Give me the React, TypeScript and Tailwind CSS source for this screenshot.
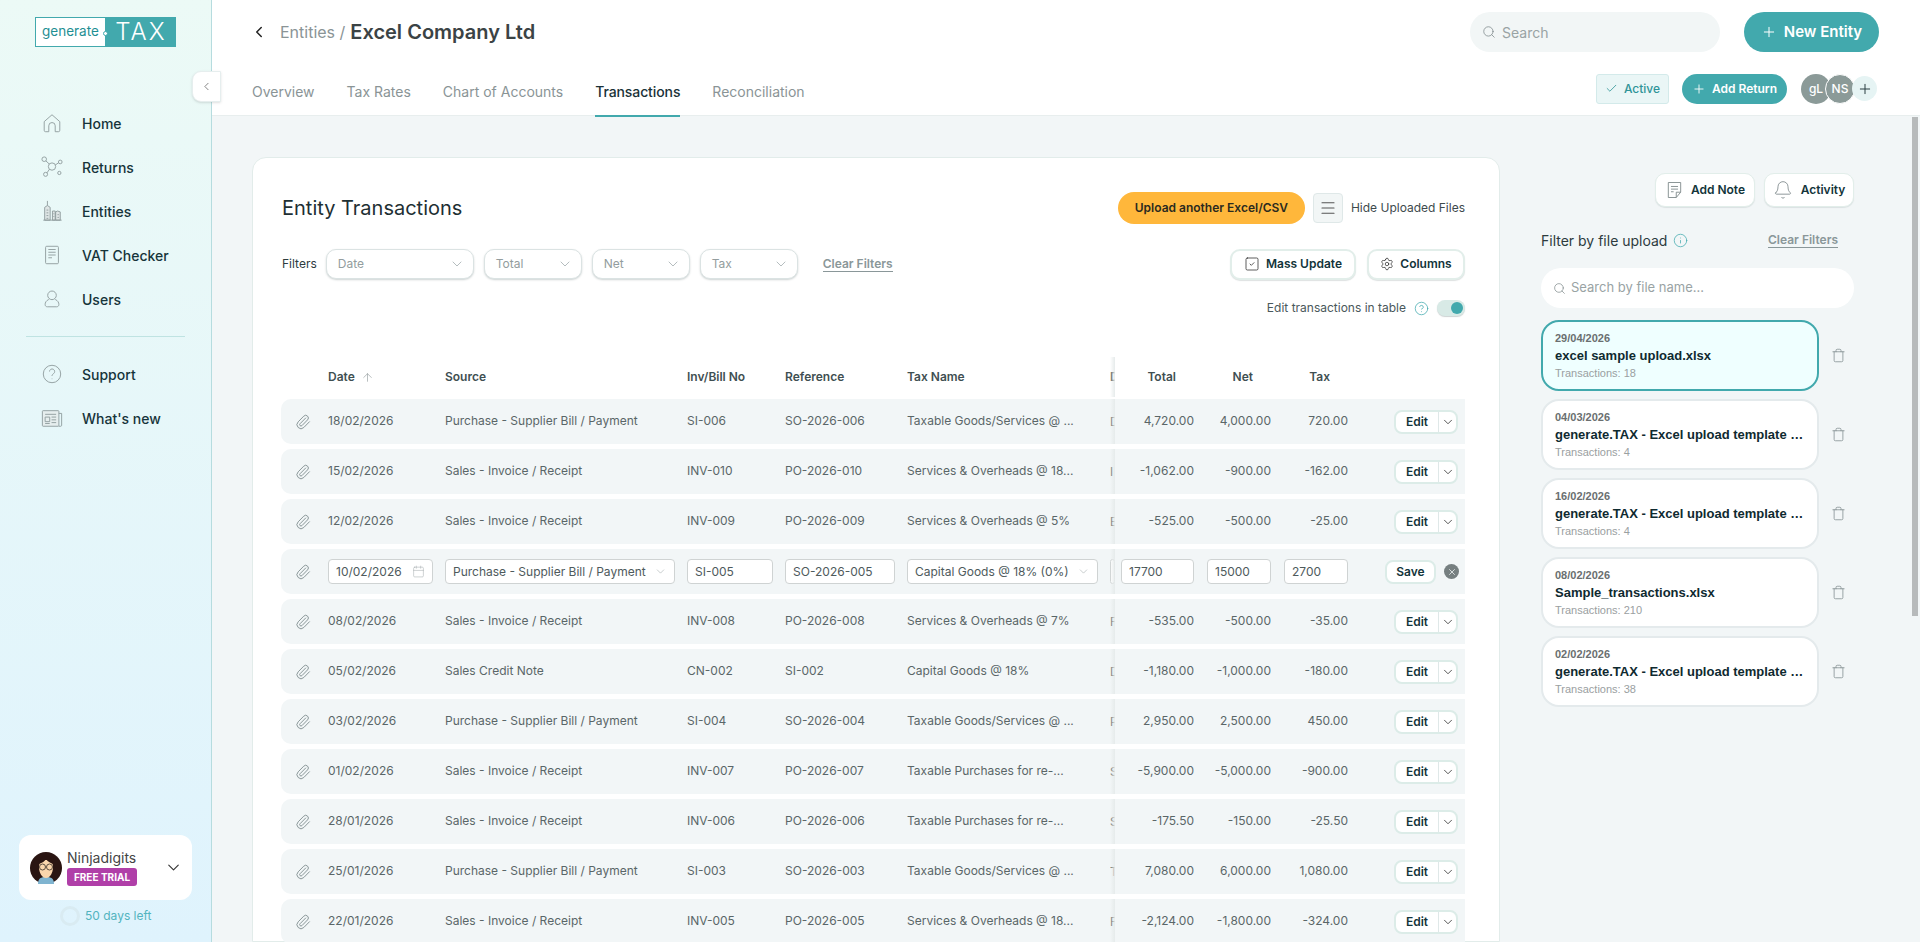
import {
  Bell,
  Calendar,
  Check,
  ChevronDown,
  ChevronLeft,
  CircleHelp,
  Info,
  Menu,
  Paperclip,
  Plus,
  Search,
  Settings,
  SquareCheck,
  Trash,
  ArrowUp,
  X,
} from "lucide-react";

const gridCols =
  "grid w-[1184px] grid-cols-[47px_117px_242px_98px_122px_203px_5px_79px_77px_77px_1fr] items-center";

type Txn = {
  date: string;
  source: string;
  inv: string;
  ref: string;
  taxName: string;
  d: string;
  total: string;
  net: string;
  tax: string;
};

const PURCHASE = "Purchase - Supplier Bill / Payment";
const SALES = "Sales - Invoice / Receipt";

const txns: (Txn | null)[] = [
  { date: "18/02/2026", source: PURCHASE, inv: "SI-006", ref: "SO-2026-006", taxName: "Taxable Goods/Services @ ...", d: "D", total: "4,720.00", net: "4,000.00", tax: "720.00" },
  { date: "15/02/2026", source: SALES, inv: "INV-010", ref: "PO-2026-010", taxName: "Services & Overheads @ 18...", d: "I", total: "-1,062.00", net: "-900.00", tax: "-162.00" },
  { date: "12/02/2026", source: SALES, inv: "INV-009", ref: "PO-2026-009", taxName: "Services & Overheads @ 5%", d: "E", total: "-525.00", net: "-500.00", tax: "-25.00" },
  null,
  { date: "08/02/2026", source: SALES, inv: "INV-008", ref: "PO-2026-008", taxName: "Services & Overheads @ 7%", d: "F", total: "-535.00", net: "-500.00", tax: "-35.00" },
  { date: "05/02/2026", source: "Sales Credit Note", inv: "CN-002", ref: "SI-002", taxName: "Capital Goods @ 18%", d: "D", total: "-1,180.00", net: "-1,000.00", tax: "-180.00" },
  { date: "03/02/2026", source: PURCHASE, inv: "SI-004", ref: "SO-2026-004", taxName: "Taxable Goods/Services @ ...", d: "P", total: "2,950.00", net: "2,500.00", tax: "450.00" },
  { date: "01/02/2026", source: SALES, inv: "INV-007", ref: "PO-2026-007", taxName: "Taxable Purchases for re-...", d: "S", total: "-5,900.00", net: "-5,000.00", tax: "-900.00" },
  { date: "28/01/2026", source: SALES, inv: "INV-006", ref: "PO-2026-006", taxName: "Taxable Purchases for re-...", d: "S", total: "-175.50", net: "-150.00", tax: "-25.50" },
  { date: "25/01/2026", source: PURCHASE, inv: "SI-003", ref: "SO-2026-003", taxName: "Taxable Goods/Services @ ...", d: "T", total: "7,080.00", net: "6,000.00", tax: "1,080.00" },
  { date: "22/01/2026", source: SALES, inv: "INV-005", ref: "PO-2026-005", taxName: "Services & Overheads @ 18...", d: "F", total: "-2,124.00", net: "-1,800.00", tax: "-324.00" },
];

const files = [
  { date: "29/04/2026", name: "excel sample upload.xlsx", count: 18, active: true },
  { date: "04/03/2026", name: "generate.TAX - Excel upload template (2026).xlsx", count: 4 },
  { date: "16/02/2026", name: "generate.TAX - Excel upload template (2026).xlsx", count: 4 },
  { date: "08/02/2026", name: "Sample_transactions.xlsx", count: 210 },
  { date: "02/02/2026", name: "generate.TAX - Excel upload template (2026).xlsx", count: 38 },
];

function NavIcon({ name }: { name: string }) {
  const common = {
    width: 22,
    height: 22,
    viewBox: "0 0 24 24",
    fill: "none",
    stroke: "#8f9c9e",
    strokeWidth: 1,
  };
  if (name === "Home")
    return (
      <svg {...common}>
        <path d="M3.5 10.5 12 3l8.5 7.5V20a1.5 1.5 0 0 1-1.5 1.5h-3.5V15a3.5 3.5 0 0 0-7 0v6.5H5A1.5 1.5 0 0 1 3.5 20z" />
      </svg>
    );
  if (name === "Returns")
    return (
      <svg {...common}>
        <circle cx="3.5" cy="3.5" r="2.5" />
        <circle cx="12" cy="11.5" r="4" />
        <circle cx="21" cy="6.5" r="2" />
        <circle cx="5" cy="20" r="2.2" />
        <circle cx="20" cy="18.5" r="1.8" />
        <path d="m5.3 5.3 3.8 3.5M15.6 9.8 19.2 7.4M9.2 14.5l-2.7 3.9" />
      </svg>
    );
  if (name === "Entities")
    return (
      <svg {...common} fill="#dfe6e6">
        <path d="M4 22V8l3-2 3 2v14zM7 1v5M12.5 22V12h3v10zM16 22V13l2-1 3 1v9zM2.5 22h20" />
        <path d="M6 11h2M6 14h2M6 17h2M6 20h2M13.5 15h1M13.5 18h1M18 16h1.5M18 19h1.5" />
      </svg>
    );
  if (name === "VAT Checker")
    return (
      <svg {...common}>
        <rect x="5" y="2.5" width="14" height="19" rx="1.2" />
        <path d="M8 6h8M8 9h8M8 12h8M8 15h4" />
      </svg>
    );
  if (name === "Users")
    return (
      <svg {...common}>
        <circle cx="12" cy="8" r="4.7" />
        <path d="M8.5 12.5C5.5 13.8 4.5 16 4.5 18c0 1.5 1 2.5 2.5 2.5h10c1.5 0 2.5-1 2.5-2.5 0-2-1-4.2-4-5.5" />
      </svg>
    );
  if (name === "Support")
    return (
      <svg {...common}>
        <circle cx="12" cy="12" r="9.5" />
        <path d="M9.3 9.3a2.8 2.8 0 1 1 4.4 2.3c-1 .7-1.7 1.3-1.7 2.6M12 17v.6" />
      </svg>
    );
  return (
    <svg {...common}>
      <rect x="1.5" y="4" width="18" height="17" rx="0.8" fill="#e6eeee" />
      <path d="M19.5 7h3v13a1 1 0 0 1-1 1h-2M4.5 8h12M4.5 11h5v5h-5zM11.5 11h5M11.5 14h5M11.5 17h5M4.5 18h5" />
    </svg>
  );
}

function Sidebar() {
  const nav = ["Home", "Returns", "Entities", "VAT Checker", "Users"];
  return (
    <aside className="relative z-10 flex h-full w-[212px] shrink-0 flex-col border-r border-[#b6dcdf] bg-gradient-to-b from-[#ecfaf6] to-[#dff3fd]">
      {/* logo */}
      <div className="ml-[35px] mt-[17px] flex h-[30px] w-[141px] border border-[#42a9ad]">
        <div className="relative flex w-[69px] items-center bg-white pl-[6px] text-[13.5px] leading-none text-[#1f8f93]">
          generate
          <span className="absolute right-[-3px] top-[13px] h-[5px] w-[5px] rounded-full border border-[#42a9ad] bg-white" />
        </div>
        <div className="flex flex-1 items-center justify-center bg-[#42a9ad] pl-[2px] text-[24px] font-light leading-none tracking-[2px] text-white">
          TAX
        </div>
      </div>
      <nav className="mt-[54px] flex flex-col">
        {nav.map((n) => (
          <div key={n} className="flex h-[44px] items-center pl-[41px] text-[14px] font-medium text-[#16343a]">
            <span className="flex w-[41px]">
              <NavIcon name={n} />
            </span>
            {n}
          </div>
        ))}
      </nav>
      <div className="ml-[26px] mt-[15px] h-px w-[159px] bg-[#bfe3e2]" />
      <div className="mt-[15px] flex flex-col">
        {["Support", "What's new"].map((n) => (
          <div key={n} className="flex h-[44px] items-center pl-[41px] text-[14px] font-medium text-[#16343a]">
            <span className="flex w-[41px]">
              <NavIcon name={n} />
            </span>
            {n}
          </div>
        ))}
      </div>
      <div className="mt-auto ml-[19px] flex h-[65px] w-[173px] items-center rounded-xl bg-white pl-[11px]">
        <svg width="32" height="32" viewBox="0 0 32 32" className="shrink-0">
          <circle cx="16" cy="16" r="16" fill="#2a1512" />
          <path d="M8 32c0-6 3-7 8-7s8 1 8 7z" fill="#7fb4d0" />
          <path d="M9 15c0-5 3-7 7-7s7 2 7 7c0 6-3 11-7 11s-7-5-7-11z" fill="#fbd6ac" />
          <path d="M9 12c3-1 6-3 7-5 2 3 5 4 7 5-1-5-3-8-7-8s-6 3-7 8z" fill="#2a1512" />
          <circle cx="12.5" cy="15" r="3" fill="none" stroke="#5b4d3f" strokeWidth="1" />
          <circle cx="19.5" cy="15" r="3" fill="none" stroke="#5b4d3f" strokeWidth="1" />
        </svg>
        <div className="ml-[5px] flex flex-col">
          <span className="text-[14px] leading-[18px] text-[#444]">Ninjadigits</span>
          <span className="mt-px flex h-[18px] w-[70px] items-center justify-center rounded-[3px] bg-[#b03fa8] text-[10px] font-bold text-white">
            FREE TRIAL
          </span>
        </div>
        <ChevronDown className="ml-[27px]" size={19} strokeWidth={1.4} color="#333" />
      </div>
      <div className="ml-[60px] mb-[16px] mt-[6px] flex h-[20px] items-center">
        <span className="h-[20px] w-[20px] rounded-full border-[3px] border-[#d9ebf2]" />
        <span className="ml-[5px] text-[12px] text-[#53b4bf]">50 days left</span>
      </div>
      {/* collapse toggle sits over the header */}
      <button className="absolute left-[192px] top-[71px] flex h-[31px] w-[29px] items-center justify-center rounded-l-[9px] border border-[#e6eeee] bg-white shadow-sm">
        <ChevronLeft size={13} strokeWidth={1.2} color="#444" />
      </button>
    </aside>
  );
}

function Header() {
  const tabs = ["Overview", "Tax Rates", "Chart of Accounts", "Transactions", "Reconciliation"];
  return (
    <header className="relative z-[1] h-[116px] shrink-0 border-b border-[#e8eeee] bg-white pl-[40px] pr-[41px]">
      <div className="flex h-[64px] items-center">
        <ChevronLeft className="ml-[-2px]" size={18} strokeWidth={2} color="#222" />
        <span className="ml-[12px] text-[16px] text-[#8a9496]">Entities /</span>
        <span className="ml-[5px] text-[20px] font-semibold text-[#3b4345]">Excel Company Ltd</span>
        <div className="ml-auto flex h-[40px] w-[250px] items-center rounded-[20px] bg-[#f2f6f6] pl-[12px] text-[14px] text-[#99a3a4]">
          <Search size={14} strokeWidth={1.3} color="#7c8789" />
          <span className="ml-[6px]">Search</span>
        </div>
        <button className="ml-[24px] flex h-[40px] w-[135px] items-center justify-center rounded-[20px] bg-[#42a9ad] text-[15px] font-semibold text-white">
          <Plus size={16} strokeWidth={1.5} />
          <span className="ml-[7px]">New Entity</span>
        </button>
      </div>
      <div className="flex h-[52px]">
        <div className="flex h-[53px] gap-[32px]">
          {tabs.map((t) =>
            t === "Transactions" ? (
              <div key={t} className="flex h-full items-center border-b-2 border-[#42a9ad] pt-[4px] text-[14px] font-medium tracking-[-0.1px] text-[#1a3238]">
                {t}
              </div>
            ) : (
              <div key={t} className="flex h-full items-center pt-[2px] text-[14px] text-[#8a9496]">
                {t}
              </div>
            )
          )}
        </div>
        <div className="ml-auto mt-[9px] flex h-[31px] items-center pr-[2px]">
          <div className="flex h-[30px] w-[73px] items-center justify-center rounded-[3px] border border-[#d3eaea] bg-[#eaf6f6] text-[12px] font-medium text-[#2f9498]">
            <Check size={13} strokeWidth={1.5} />
            <span className="ml-[6px]">Active</span>
          </div>
          <button className="ml-[13px] flex h-[30px] w-[105px] items-center justify-center rounded-[15px] bg-[#42a9ad] text-[12px] font-semibold text-white">
            <Plus size={14} strokeWidth={1.5} />
            <span className="ml-[6px]">Add Return</span>
          </button>
          <span className="ml-[14px] flex h-[30px] w-[30px] items-center justify-center rounded-full bg-[#8b9a98] text-[12px] font-medium text-white">gL</span>
          <span className="ml-[-6px] flex h-[30px] w-[30px] items-center justify-center rounded-full border border-white bg-[#8b9a98] text-[12px] font-medium text-white">NS</span>
          <span className="ml-[-3px] flex h-[25px] w-[25px] items-center justify-center rounded-full bg-[#e6f4f4] text-[#2b3f42]">
            <Plus size={16} strokeWidth={1.5} />
          </span>
        </div>
      </div>
    </header>
  );
}

function FilterSelect({ label, w }: { label: string; w: string }) {
  return (
    <div className={`flex h-[30px] ${w} items-center justify-between rounded-[10px] border border-[#dbe3e3] bg-white pl-[11px] pr-[8px] text-[12px] text-[#939d9e] shadow-[0_1px_2px_rgba(90,110,110,0.3)]`}>
      {label}
      <ChevronDown size={16} strokeWidth={1} color="#8f9c9e" />
    </div>
  );
}

function Cut({ children }: { children?: React.ReactNode }) {
  return (
    <div className="relative h-full self-stretch overflow-hidden">
      <div className="flex h-full items-center whitespace-nowrap">{children}</div>
      <div className="absolute inset-0 bg-gradient-to-r from-transparent to-[#e6ebeb]" />
    </div>
  );
}

function EditButton() {
  return (
    <div className="flex h-[24px] w-[64px] items-center rounded-lg border-2 border-[#dcece8] bg-white text-[12px] font-semibold text-[#12343a]">
      <span className="flex h-full w-[43px] items-center justify-center border-r border-[#dfe8e8]">Edit</span>
      <span className="flex flex-1 justify-center">
        <ChevronDown size={14} strokeWidth={1.3} color="#222" />
      </span>
    </div>
  );
}

const inputCls = "flex h-[25px] items-center rounded-[4px] border border-[#cfd3d3] bg-white px-[7px] text-[12px] text-[#4e5a5c]";

function EditRow() {
  return (
    <div className={`${gridCols} mb-[5px] h-[45px] rounded-l-[10px] bg-[#f2f6f7] text-[12px] text-[#5a6668]`}>
      <span className="flex justify-center pr-[3px]">
        <Paperclip size={16} strokeWidth={1.5} color="#8a9799" />
      </span>
      <div className={`${inputCls} w-[105px] justify-between`}>
        10/02/2026
        <Calendar size={13} strokeWidth={1} color="#a5aeaf" />
      </div>
      <div className={`${inputCls} w-[230px] justify-between whitespace-nowrap`}>
        {PURCHASE}
        <ChevronDown size={13} strokeWidth={1} color="#9aa4a5" />
      </div>
      <div className={`${inputCls} w-[86px]`}>SI-005</div>
      <div className={`${inputCls} w-[110px]`}>SO-2026-005</div>
      <div className={`${inputCls} w-[191px] justify-between whitespace-nowrap`}>
        Capital Goods @ 18% (0%)
        <ChevronDown size={13} strokeWidth={1} color="#9aa4a5" />
      </div>
      <Cut>
        <div className="h-[25px] w-[40px] rounded-[4px] border border-[#cfd3d3] bg-white" />
      </Cut>
      <div className="flex justify-end">
        <div className={`${inputCls} w-[73px]`}>17700</div>
      </div>
      <div className="flex justify-end">
        <div className={`${inputCls} w-[64px]`}>15000</div>
      </div>
      <div className="flex justify-end">
        <div className={`${inputCls} w-[64px]`}>2700</div>
      </div>
      <div className="flex items-center justify-end pr-[6px]">
        <button className="flex h-[24px] w-[51px] items-center justify-center rounded-lg border-2 border-[#dcece8] bg-white text-[12px] font-semibold text-[#12343a]">
          Save
        </button>
        <span className="ml-[8px] flex h-[15px] w-[15px] items-center justify-center rounded-full bg-[#767f80]">
          <X size={10} strokeWidth={2} color="#e8eded" />
        </span>
      </div>
    </div>
  );
}

function TxnRow({ t }: { t: Txn }) {
  return (
    <div className={`${gridCols} mb-[5px] h-[45px] rounded-l-[10px] bg-[#f2f6f7] text-[12px] text-[#5a6668]`}>
      <span className="flex justify-center pr-[3px]">
        <Paperclip size={16} strokeWidth={1.5} color="#8a9799" />
      </span>
      <span className="mb-[2px]">{t.date}</span>
      <span className="mb-[2px]">{t.source}</span>
      <span className="mb-[2px]">{t.inv}</span>
      <span className="mb-[2px]">{t.ref}</span>
      <span className="mb-[2px] whitespace-nowrap">{t.taxName}</span>
      <Cut>{t.d}</Cut>
      <span className="mb-[2px] text-right">{t.total}</span>
      <span className="mb-[2px] text-right">{t.net}</span>
      <span className="mb-[2px] text-right">{t.tax}</span>
      <div className="flex justify-end pr-[7px]">
        <EditButton />
      </div>
    </div>
  );
}

function TransactionsCard() {
  return (
    <section className="w-[1248px] shrink-0 rounded-t-[14px] border border-[#e2ecea] bg-white pl-[28px] pt-[34px]">
      <div className="flex h-[32px] w-[1184px] items-center">
        <h2 className="pl-px text-[20px] font-normal text-[#1e2f33]">Entity Transactions</h2>
        <button className="ml-auto flex h-[32px] w-[187px] items-center justify-center rounded-[16px] bg-[#ffb73b] text-[12px] font-semibold text-[#2b2a1f]">
          Upload another Excel/CSV
        </button>
        <span className="ml-[8px] flex h-[30px] w-[30px] items-center justify-center rounded-[4px] border border-[#dfe8e8] bg-[#f2f6f6]">
          <Menu size={18} strokeWidth={1.5} color="#555" />
        </span>
        <span className="ml-[8px] text-[12px] text-[#3d4a4d]">Hide Uploaded Files</span>
      </div>
      <div className="mt-[25px] flex h-[30px] w-[1184px] items-center">
        <span className="pl-px text-[12px] text-[#2d3b3e]">Filters</span>
        <div className="ml-[9px] flex gap-[10px]">
          <FilterSelect label="Date" w="w-[148px]" />
          <FilterSelect label="Total" w="w-[98px]" />
          <FilterSelect label="Net" w="w-[98px]" />
          <FilterSelect label="Tax" w="w-[98px]" />
        </div>
        <span className="ml-[25px] border-b border-[#8a9799] text-[12px] font-semibold leading-[14px] text-[#8a9799]">Clear Filters</span>
        <button className="ml-auto flex h-[31px] w-[126px] items-center justify-center rounded-[10px] border-2 border-[#e2eeea] bg-white text-[12px] font-semibold text-[#12343a] shadow-[0_1px_1px_rgba(90,110,110,0.2)]">
          <SquareCheck size={16} strokeWidth={1.1} color="#222" />
          <span className="ml-[6px]">Mass Update</span>
        </button>
        <button className="ml-[11px] flex h-[31px] w-[98px] items-center justify-center rounded-[10px] border-2 border-[#e2eeea] bg-white text-[12px] font-semibold text-[#12343a] shadow-[0_1px_1px_rgba(90,110,110,0.2)]">
          <Settings size={14} strokeWidth={1.2} color="#222" />
          <span className="ml-[6px]">Columns</span>
        </button>
      </div>
      <div className="mt-[21px] flex h-[16px] w-[1184px] items-center justify-end text-[12px] text-[#4a585b]">
        Edit transactions in table
        <CircleHelp className="ml-[8px]" size={15} strokeWidth={1.2} color="#42a9ad" />
        <span className="ml-[8px] flex h-[16px] w-[28px] items-center justify-end rounded-[8px] bg-[#d8eae6] pr-[2px] shadow-[0_1px_1px_rgba(90,110,110,0.3)]">
          <span className="h-[12px] w-[12px] rounded-full bg-[#42a9ad]" />
        </span>
      </div>
      <div className={`${gridCols} mt-[41px] mb-[2px] h-[40px] text-[12px] font-semibold text-[#3f4f52]`}>
        <span />
        <span className="flex items-center">
          Date
          <ArrowUp className="ml-[6px]" size={13} strokeWidth={1} color="#7c8789" />
        </span>
        <span>Source</span>
        <span>Inv/Bill No</span>
        <span>Reference</span>
        <span>Tax Name</span>
        <Cut>D</Cut>
        <span className="pr-[18px] text-right">Total</span>
        <span className="pr-[18px] text-right">Net</span>
        <span className="pr-[18px] text-right">Tax</span>
        <span />
      </div>
      {txns.map((t, i) => (t ? <TxnRow key={i} t={t} /> : <EditRow key={i} />))}
    </section>
  );
}

function FilesPanel() {
  return (
    <aside className="ml-[41px] w-[313px] shrink-0 pt-[16px]">
      <div className="flex justify-end gap-[9px]">
        <button className="flex h-[34px] w-[100px] items-center justify-center rounded-[10px] border border-[#e2eeea] bg-white pl-[2px] text-[12px] font-semibold text-[#12343a] shadow-[0_1px_1px_rgba(90,110,110,0.15)]">
          <svg width="15" height="18" viewBox="0 0 17 20" fill="none" stroke="#7c8789" strokeWidth="1">
            <path d="M1.5 1.5h14v11l-5 6h-9zM10.5 18.5v-6h5M4.5 6h8M4.5 9h8M4.5 12h3" />
          </svg>
          <span className="ml-[9px]">Add Note</span>
        </button>
        <button className="flex h-[34px] w-[90px] items-center justify-center rounded-[10px] border border-[#e2eeea] bg-white text-[12px] font-semibold text-[#12343a] shadow-[0_1px_1px_rgba(90,110,110,0.15)]">
          <Bell size={20} strokeWidth={0.9} color="#6c787a" />
          <span className="ml-[8px]">Activity</span>
        </button>
      </div>
      <div className="mt-[24px] flex h-[18px] items-center pr-[16px]">
        <span className="text-[14px] text-[#2d3b3e]">Filter by file upload</span>
        <Info className="ml-[6px]" size={15} strokeWidth={1.2} color="#42a9ad" />
        <span className="ml-auto border-b border-[#8a9799] text-[12px] font-semibold leading-[14px] text-[#8a9799]">Clear Filters</span>
      </div>
      <div className="mt-[19px] flex h-[40px] items-center rounded-[20px] bg-white pl-[12px] text-[13px] text-[#99a3a4]">
        <Search size={13} strokeWidth={1.3} color="#7c8789" />
        <span className="ml-[5px]">Search by file name...</span>
      </div>
      <div className="mt-[12px] flex flex-col gap-[8px]">
        {files.map((f, i) => (
          <div key={i} className="flex items-center">
            <div className={`h-[71px] w-[278px] rounded-[18px] border-2 px-[12px] pt-[8px] font-['Liberation_Sans',Arial,sans-serif] ${f.active ? "border-[#42a9ad] bg-[#efffff]" : "border-[#e4eaec] bg-white"}`}>
              <div className="text-[11px] font-bold leading-[16px] text-[#6a6f70]">{f.date}</div>
              <div className="truncate text-[13px] font-bold leading-[19px] text-[#0f2a30]">{f.name}</div>
              <div className="text-[11px] leading-[16px] text-[#9aa0a1]">Transactions: {f.count}</div>
            </div>
            <Trash className="ml-[12px]" size={15} strokeWidth={1.2} color="#7d8a8c" />
          </div>
        ))}
      </div>
    </aside>
  );
}

export default function App() {
  return (
    <div className="flex h-[942px] w-[1920px] overflow-hidden bg-white font-['Inter',sans-serif]">
      <Sidebar />
      <main className="relative flex min-w-0 flex-1 flex-col">
        <Header />
        <div className="flex min-h-0 flex-1 overflow-hidden bg-[#f2f6f7] pl-[40px] pt-[41px]">
          <TransactionsCard />
          <FilesPanel />
        </div>
        {/* scrollbar thumb */}
        <div className="absolute right-[2px] top-[117px] h-[499px] w-[6px] bg-[#b7babb]" />
      </main>
    </div>
  );
}
